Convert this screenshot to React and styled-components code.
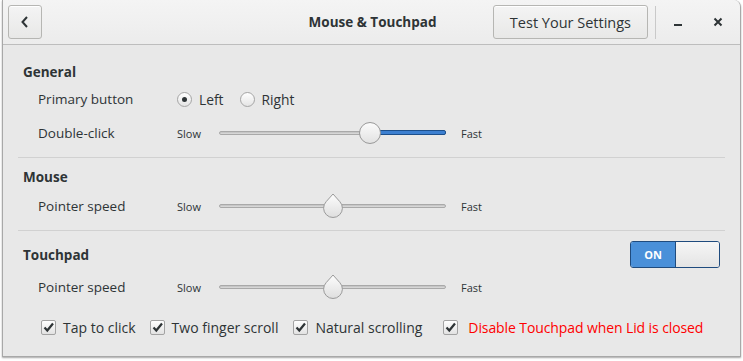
import React from "react";
import styled, { createGlobalStyle } from "styled-components";

const Global = createGlobalStyle`
  html, body { margin: 0; padding: 0; background: #ffffff; }
  body { font-family: "Open Sans", "DejaVu Sans", sans-serif; color: #2e3436; }
  * { box-sizing: border-box; }
`;

const Page = styled.div`
  width: 743px;
  height: 361px;
  padding: 0 2px 4px 2px;
  background: #ffffff;
`;

const Window = styled.div`
  width: 739px;
  height: 357px;
  border: 1px solid #a8a8a8;
  border-top: none;
  border-radius: 0 7px 0 0;
  background: #e8e8e8;
  display: flex;
  flex-direction: column;
  overflow: hidden;
  box-shadow: 0 1px 2px rgba(0,0,0,0.35);
`;

const HeaderBar = styled.div`
  height: 45px;
  flex: none;
  display: flex;
  align-items: center;
  padding: 0 0 0 5px;
  background: linear-gradient(#f4f4f4, #ececec);
  border-bottom: 1px solid #bdbdbd;
  position: relative;
`;

const HeadButton = styled.button`
  height: 34px;
  min-width: 34px;
  padding: 0 ${p => (p.$icon ? "0" : "16px")};
  border: 1px solid #b6b6b3;
  border-radius: 3px;
  background: linear-gradient(#f4f4f4, #e8e8e7);
  box-shadow: inset 0 1px #ffffff;
  font-family: "Open Sans", sans-serif;
  font-size: 14.5px;
  color: #2e3436;
  display: flex;
  align-items: center;
  justify-content: center;
`;

const Title = styled.div`
  position: absolute;
  left: 0;
  right: 0;
  top: 0;
  height: 44px;
  display: flex;
  align-items: center;
  justify-content: center;
  font-weight: 700;
  font-size: 13.5px;
  pointer-events: none;
  padding-left: 2px;
`;

const Spacer = styled.div`
  flex: 1;
`;

const VSep = styled.div`
  width: 1px;
  height: 33px;
  background: #c9c9c9;
  margin: 0 4px 0 7px;
`;

const WinCtl = styled.div`
  width: 36px;
  height: 36px;
  display: flex;
  align-items: center;
  justify-content: center;
  margin-right: ${p => p.$mr || 0}px;
`;

const Content = styled.div`
  flex: 1;
  padding: 17px 15px 0 15px;
  display: flex;
  flex-direction: column;
`;

const Section = styled.div`
  display: flex;
  flex-direction: column;
  padding: ${p => p.$pt || 0}px 0 ${p => p.$pb || 0}px 0;
  border-bottom: ${p => (p.$sep ? "1px solid #d1d1d1" : "none")};
`;

const HeadingRow = styled.div`
  height: ${p => p.$h || 20}px;
  display: flex;
  align-items: center;
  justify-content: space-between;
  padding: 0 5px 0 5px;
`;

const Heading = styled.div`
  font-weight: 700;
  font-size: 13.5px;
`;

const Row = styled.div`
  height: 34px;
  margin-top: ${p => p.$mt || 0}px;
  display: grid;
  grid-template-columns: 139px auto;
  align-items: center;
  padding-left: 20px;
`;

const Label = styled.div`
  font-size: 13.5px;
`;

const Controls = styled.div`
  display: flex;
  align-items: center;
`;

const RadioItem = styled.label`
  display: flex;
  align-items: center;
  font-size: 13.8px;
  margin-right: 16px;
`;

const RadioCircle = styled.span`
  width: 15px;
  height: 15px;
  border-radius: 50%;
  border: 1px solid #a5a5a5;
  background: linear-gradient(#ffffff, #e4e4e4);
  margin-right: 7px;
  display: flex;
  align-items: center;
  justify-content: center;
  &::after {
    content: "";
    width: 5px;
    height: 5px;
    border-radius: 50%;
    background: ${p => (p.$on ? "#2e3436" : "transparent")};
  }
`;

const Small = styled.div`
  font-size: 11px;
  width: ${p => p.$w || "auto"};
`;

const SliderWrap = styled.div`
  position: relative;
  width: 227px;
  height: 26px;
  margin-right: 15px;
`;

const Track = styled.div`
  position: absolute;
  left: 0;
  right: 0;
  top: 11px;
  height: 4px;
  border-radius: 2px;
  border: 1px solid #a9a9a9;
  background: linear-gradient(#bfbfbf, #dedede);
`;

const Fill = styled.div`
  position: absolute;
  right: 0;
  top: 10px;
  height: 5px;
  border-radius: 2px;
  border: 1px solid #1c4f8b;
  background: #3c7fd0;
`;

const RoundKnob = styled.div`
  position: absolute;
  top: 2px;
  width: 22px;
  height: 22px;
  margin-left: -11px;
  border-radius: 50%;
  border: 1px solid #999;
  background: linear-gradient(#fbfbfb, #e2e2e2);
`;

const DropKnob = styled.svg`
  position: absolute;
  top: 0px;
  margin-left: -12px;
`;

function Slider({ value, fill, drop }) {
  const x = Math.round(227 * value);
  return (
    <SliderWrap>
      <Track />
      {fill && <Fill style={{ left: x }} />}
      {drop ? (
        <DropKnob width="24" height="27" viewBox="0 0 24 27" style={{ left: x }}>
          <defs>
            <linearGradient id="kg" x1="0" y1="0" x2="0" y2="1">
              <stop offset="0" stopColor="#fdfdfd" />
              <stop offset="1" stopColor="#dedede" />
            </linearGradient>
          </defs>
          <path
            d="M12 1 L18.8 8.6 A9.4 9.4 0 1 1 5.2 8.6 Z"
            fill="url(#kg)"
            stroke="#9a9a9a"
            strokeWidth="1"
          />
        </DropKnob>
      ) : (
        <RoundKnob style={{ left: x }} />
      )}
    </SliderWrap>
  );
}

function SliderRow({ label, value, fill, drop, mt }) {
  return (
    <Row $mt={mt}>
      <Label>{label}</Label>
      <Controls>
        <Small $w="42px">Slow</Small>
        <Slider value={value} fill={fill} drop={drop} />
        <Small>Fast</Small>
      </Controls>
    </Row>
  );
}

const Switch = styled.div`
  width: 90px;
  height: 27px;
  border: 1px solid #1f4b7e;
  border-radius: 3px;
  display: flex;
  overflow: hidden;
`;

const SwitchOn = styled.div`
  width: 45px;
  background: #4a90d9;
  color: #ffffff;
  font-weight: 700;
  font-size: 11px;
  display: flex;
  align-items: center;
  justify-content: center;
  border-right: 1px solid #1f4b7e;
`;

const SwitchThumb = styled.div`
  flex: 1;
  background: linear-gradient(#f6f6f6, #e4e4e4);
`;

const CheckRow = styled.div`
  height: 34px;
  margin-top: 6px;
  display: flex;
  align-items: center;
  padding-left: 23px;
`;

const CheckItem = styled.label`
  display: flex;
  align-items: center;
  font-size: 14px;
  color: ${p => p.$color || "#2e3436"};
  margin-right: ${p => p.$mr || 14}px;
  letter-spacing: ${p => p.$ls || 0}px;
`;

const Box = styled.span`
  width: 15px;
  height: 15px;
  border: 1px solid #a3a3a3;
  border-radius: 2px;
  background: linear-gradient(#ffffff, #e2e2e2);
  margin-right: ${p => p.$gap || 7}px;
  display: flex;
  align-items: center;
  justify-content: center;
  flex: none;
`;

function Check({ children, color, mr, gap, ls }) {
  return (
    <CheckItem $color={color} $mr={mr} $ls={ls}>
      <Box $gap={gap}>
        <svg width="13" height="13" viewBox="0 0 13 13">
          <path d="M2.5 6.5 L5.3 9.5 L11 2.5" fill="none" stroke="#2e3436" strokeWidth="2.2" />
        </svg>
      </Box>
      {children}
    </CheckItem>
  );
}

export default function App() {
  return (
    <Page>
      <Global />
      <Window>
        <HeaderBar>
          <HeadButton $icon aria-label="Back">
            <svg width="16" height="16" viewBox="0 0 16 16">
              <path d="M10 3 L5.5 8 L10 13" fill="none" stroke="#2e3436" strokeWidth="2" />
            </svg>
          </HeadButton>
          <Title>Mouse &amp; Touchpad</Title>
          <Spacer />
          <HeadButton>Test Your Settings</HeadButton>
          <VSep />
          <WinCtl $mr={4}>
            <svg width="10" height="10" viewBox="0 0 10 10">
              <rect x="1" y="7" width="8" height="2" fill="#2e3436" />
            </svg>
          </WinCtl>
          <WinCtl $mr={4}>
            <svg width="10" height="10" viewBox="0 0 10 10">
              <path d="M1.5 1.5 L8.5 8.5 M8.5 1.5 L1.5 8.5" stroke="#2e3436" strokeWidth="2" />
            </svg>
          </WinCtl>
        </HeaderBar>
        <Content>
          <Section $sep $pb={7}>
            <HeadingRow>
              <Heading>General</Heading>
            </HeadingRow>
            <Row>
              <Label>Primary button</Label>
              <Controls>
                <RadioItem>
                  <RadioCircle $on />
                  Left
                </RadioItem>
                <RadioItem>
                  <RadioCircle />
                  Right
                </RadioItem>
              </Controls>
            </Row>
            <SliderRow label="Double-click" value={0.665} fill />
          </Section>
          <Section $sep $pt={9} $pb={7}>
            <HeadingRow>
              <Heading>Mouse</Heading>
            </HeadingRow>
            <SliderRow label="Pointer speed" value={0.5} drop mt={2} />
          </Section>
          <Section $pt={10}>
            <HeadingRow $h={27}>
              <Heading>Touchpad</Heading>
              <Switch>
                <SwitchOn>ON</SwitchOn>
                <SwitchThumb />
              </Switch>
            </HeadingRow>
            <SliderRow label="Pointer speed" value={0.5} drop mt={2} />
            <CheckRow>
              <Check mr={14}>Tap to click</Check>
              <Check mr={15}>Two finger scroll</Check>
              <Check mr={21}>Natural scrolling</Check>
              <Check color="#ff0000" gap={10} ls={-0.1}>Disable Touchpad when Lid is closed</Check>
            </CheckRow>
          </Section>
        </Content>
      </Window>
    </Page>
  );
}
